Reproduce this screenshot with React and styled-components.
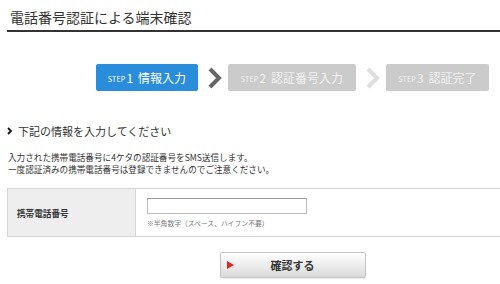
import React from 'react'
import styled, { createGlobalStyle } from 'styled-components'

const Global = createGlobalStyle`
  body {
    margin: 0;
    background: #fff;
    font-family: "Noto Sans CJK JP", "Noto Sans", sans-serif;
    color: #333;
  }
`
const Page = styled.div`
  width: 500px;
  height: 284px;
  padding-left: 7px;
  box-sizing: border-box;
  overflow: hidden;
`
const Title = styled.h1`
  margin: 0;
  font-size: 14px;
  font-weight: 400;
  line-height: 18px;
  padding: 8px 0 4px 3px;
  border-bottom: 2px solid #333;
  color: #333;
`
const Steps = styled.div`
  display: flex;
  justify-content: flex-end;
  align-items: center;
  margin-top: 32px;
  padding-right: 11px;
`
const Step = styled.div`
  width: ${p => p.w}px;
  height: 27px;
  border-radius: 2px;
  background: ${p => (p.active ? '#2a8ddb' : '#cbcbcb')};
  color: ${p => (p.active ? '#fff' : '#f2f2f2')};
  display: flex;
  align-items: center;
  justify-content: center;
  font-size: 12px;
  white-space: nowrap;
`
const StepTag = styled.span`
  font-size: 7px;
  letter-spacing: 0.2px;
  margin-right: 1px;
  padding-top: 2px;
`
const StepNum = styled.span`
  font-size: 12px;
  margin-right: 5px;
`
const Arrow = styled.svg`
  margin: 0 6px 0 9px;
  flex: none;
`
const Heading = styled.h2`
  margin: 32px 0 0;
  font-size: 11px;
  font-weight: 400;
  line-height: 16px;
  display: flex;
  align-items: center;
  gap: 6px;
`
const Desc = styled.p`
  margin: 12px 0 0 1px;
  font-size: 8.6px;
  line-height: 12px;
  color: #333;
`
const Table = styled.div`
  display: flex;
  margin-top: 13px;
  border-top: 1px solid #d6d6d6;
  border-bottom: 1px solid #d6d6d6;
  border-left: 1px solid #d6d6d6;
  height: 47px;
`
const Label = styled.div`
  width: 128px;
  background: #eeeeee;
  border-right: 1px solid #d6d6d6;
  display: flex;
  align-items: center;
  padding-left: 9px;
  box-sizing: border-box;
  font-size: 8.6px;
  font-weight: 700;
  color: #333;
`
const Cell = styled.div`
  flex: 1;
  padding: 9px 0 0 11px;
`
const Input = styled.input`
  display: block;
  width: 160px;
  height: 16px;
  box-sizing: border-box;
  border: 1px solid #bbb;
  border-top-color: #999;
  margin: 0;
  padding: 0 3px;
  outline: none;
`
const Note = styled.div`
  margin-top: 4px;
  font-size: 6.8px;
  line-height: 10px;
  color: #777;
`
const ButtonRow = styled.div`
  display: flex;
  justify-content: center;
  padding-left: 78px;
  margin-top: 15px;
`
const Button = styled.button`
  position: relative;
  width: 146px;
  height: 26px;
  border: 1px solid #c4c4c4;
  border-radius: 2px;
  background: linear-gradient(#ffffff, #e9e9e9 60%, #d9d9d9);
  font-family: inherit;
  font-size: 11px;
  font-weight: 700;
  color: #333;
  padding: 0;
  box-shadow: 0 1px 1px rgba(0, 0, 0, 0.08);
`
const Tri = styled.span`
  position: absolute;
  left: 6px;
  top: 50%;
  margin-top: -4px;
  width: 0;
  height: 0;
  border-top: 4px solid transparent;
  border-bottom: 4px solid transparent;
  border-left: 7px solid #e3241b;
`

const Chevron = ({ color }) => (
  <Arrow width="15" height="22" viewBox="0 0 15 22">
    <polyline points="3,2 12,11 3,20" fill="none" stroke={color} strokeWidth="4" />
  </Arrow>
)

const App = () => {
  return (
    <Page>
      <Global />
      <Title>電話番号認証による端末確認</Title>
      <Steps>
        <Step active w={102}>
          <StepTag>STEP</StepTag>
          <StepNum>1</StepNum>情報入力
        </Step>
        <Chevron color="#666" />
        <Step w={128}>
          <StepTag>STEP</StepTag>
          <StepNum>2</StepNum>認証番号入力
        </Step>
        <Chevron color="#dedede" />
        <Step w={103}>
          <StepTag>STEP</StepTag>
          <StepNum>3</StepNum>認証完了
        </Step>
      </Steps>
      <Heading>
        <svg width="5" height="8" viewBox="0 0 5 8">
          <polyline points="1,1 4,4 1,7" fill="none" stroke="#111" strokeWidth="1.8" />
        </svg>
        下記の情報を入力してください
      </Heading>
      <Desc>
        入力された携帯電話番号に4ケタの認証番号をSMS送信します。
        <br />
        一度認証済みの携帯電話番号は登録できませんのでご注意ください。
      </Desc>
      <Table>
        <Label>携帯電話番号</Label>
        <Cell>
          <Input type="text" />
          <Note>※半角数字（スペース、ハイフン不要）</Note>
        </Cell>
      </Table>
      <ButtonRow>
        <Button>
          <Tri />
          確認する
        </Button>
      </ButtonRow>
    </Page>
  )
}

export default App
